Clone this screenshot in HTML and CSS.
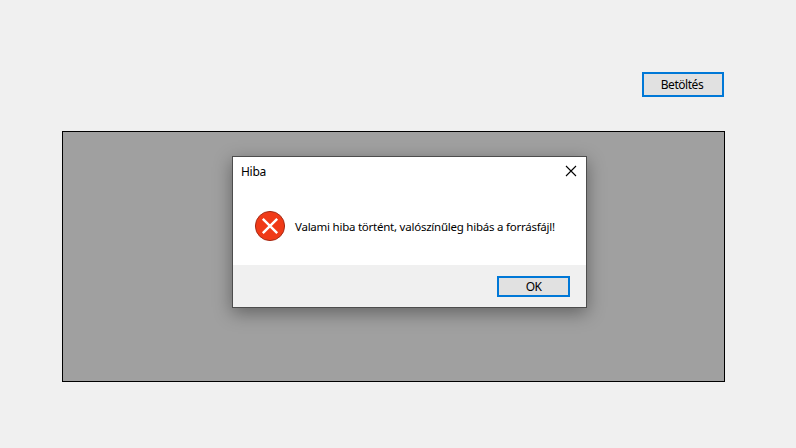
FILE: index.html
```
<!DOCTYPE html>
<html lang="hu">
<head>
<meta charset="utf-8">
<title>Hiba</title>
<link rel="stylesheet" href="styles.css">
</head>
<body>
<main class="form">
  <div class="toolbar"><button class="button load"><span>Betöltés</span></button></div>
  <div class="grid-view"></div>
</main>
<section class="dialog" role="alertdialog">
  <header class="title-bar">
    <span class="title">Hiba</span>
    <svg class="close" width="12" height="12" viewBox="0 0 12 12"><path d="M1 1l10 10M11 1L1 11" stroke="#000" stroke-width="1.1" fill="none"/></svg>
  </header>
  <div class="content">
    <svg class="error-icon" width="32" height="32" viewBox="0 0 32 32">
      <circle cx="16" cy="16" r="14.6" fill="#f03a17" stroke="#a62b16" stroke-width="1"/>
      <path d="M8.8 8.8l14.4 14.4M23.2 8.8L8.8 23.2" stroke="#fff" stroke-width="2.4" fill="none"/>
    </svg>
    <span class="message">Valami hiba történt, valószínűleg hibás a forrásfájl!</span>
  </div>
  <footer class="actions"><button class="button ok"><span>OK</span></button></footer>
</section>
</body>
</html>
```
FILE: styles.css
```
* { box-sizing: border-box; }
body {
  margin: 0;
  width: 796px;
  height: 448px;
  overflow: hidden;
  background: #f0f0f0;
  color: #000;
  font: 12px/16px "Noto Sans", "Open Sans", sans-serif;
}
.form { padding: 72px 71px 0 62px; }
.toolbar {
  display: flex;
  justify-content: flex-end;
  padding-right: 1px;
  margin-bottom: 34px;
}
.button {
  display: flex;
  align-items: center;
  justify-content: center;
  padding: 0;
  border: 2px solid #0078d7;
  background: #e1e1e1;
  color: #000;
  font: inherit;
  white-space: nowrap;
}
.load { width: 82px; height: 25px; padding: 1px 2px 0 0; }
.load span { letter-spacing: -0.45px; }
.ok { width: 73px; height: 21px; padding-top: 2px; }
.ok span { letter-spacing: -0.6px; }
.grid-view {
  height: 251px;
  border: 1px solid #000;
  background: #a0a0a0;
}
.dialog {
  position: absolute;
  left: 232px;
  top: 156px;
  width: 355px;
  height: 152px;
  display: flex;
  flex-direction: column;
  border: 1px solid #4d4d4d;
  background: #fff;
  box-shadow: 0 5px 17px rgba(0, 0, 0, .38);
}
.title-bar {
  display: flex;
  align-items: center;
  justify-content: space-between;
  height: 30px;
  padding: 0 9px 0 8px;
}
.title { letter-spacing: -0.3px; }
.close { margin-bottom: 2px; }
.content {
  flex: 1;
  display: flex;
  align-items: center;
  gap: 9px;
  padding: 0 0 0 21px;
}
.message { padding-top: 2px; white-space: nowrap; font-size: 11.5px; letter-spacing: -0.24px; }
.actions {
  display: flex;
  align-items: center;
  justify-content: flex-end;
  height: 42px;
  padding-right: 16px;
  background: #f0f0f0;
}
```
